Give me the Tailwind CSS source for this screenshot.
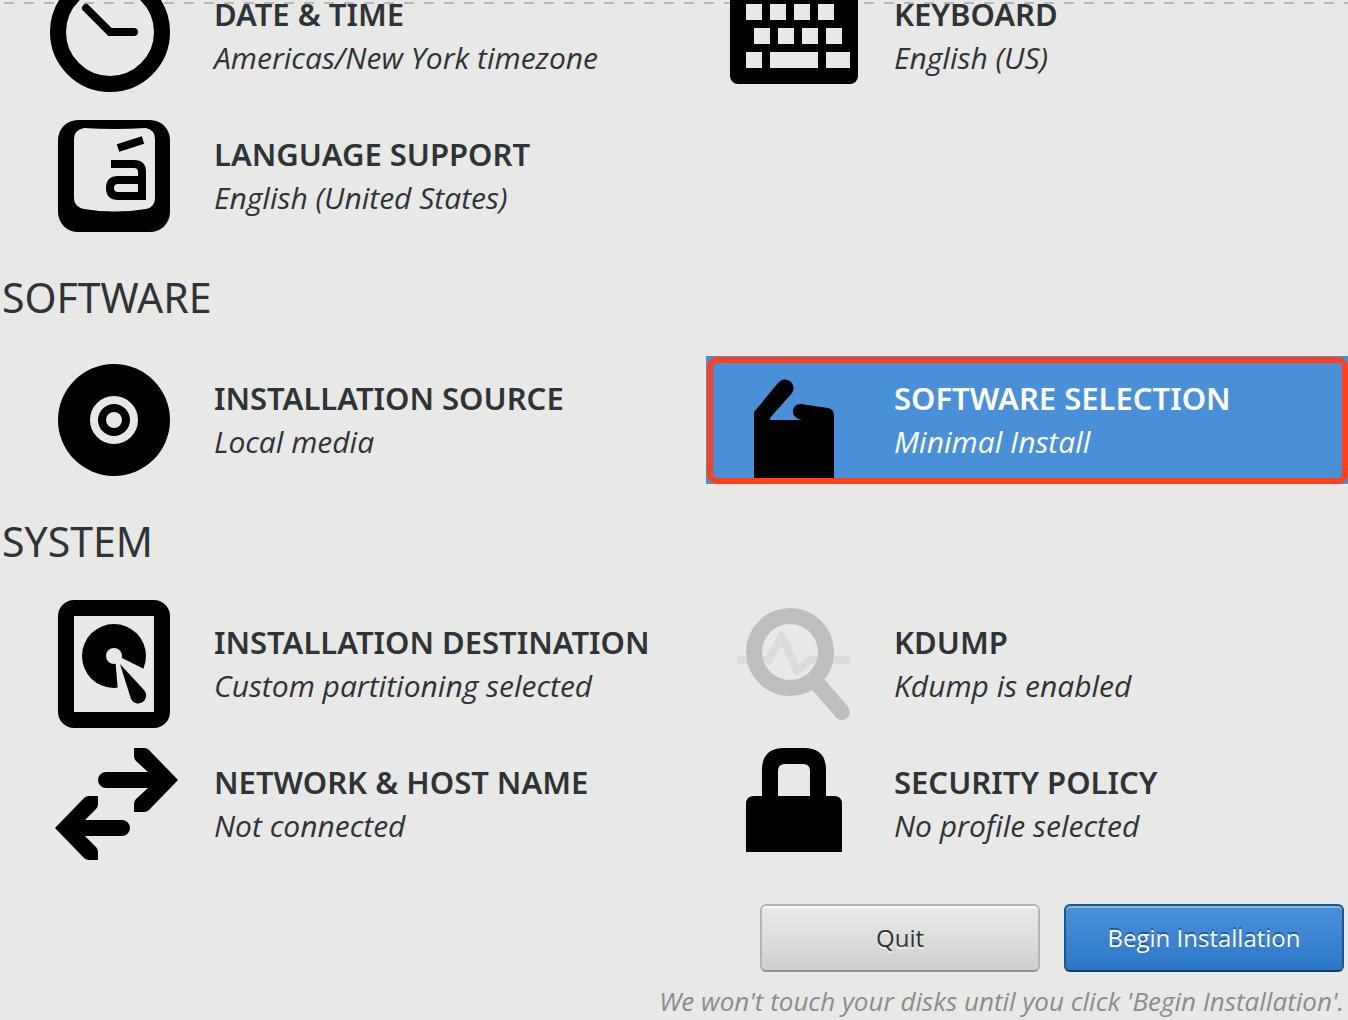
<!DOCTYPE html>
<html lang="en">
<head>
<meta charset="utf-8">
<title>Installation Summary</title>
<script src="https://cdn.jsdelivr.net/npm/@tailwindcss/browser@4"></script>
</head>
<body class="relative min-h-screen overflow-hidden bg-[#e8e8e6] font-['Noto_Sans',sans-serif] text-[#2e3436]">
<!-- scroll edge marker -->
<div class="absolute inset-x-0 top-0.5 h-0.5 bg-[repeating-linear-gradient(90deg,transparent_0_4px,#b6b6b4_4px_14px,transparent_14px_20px)]"></div>

<main class="relative -mt-7">
  <section class="grid grid-cols-2 gap-x-[38px] gap-y-3 pl-[26px]">
    <button type="button" class="flex h-32 items-center gap-9 pl-6 text-left">
      <svg class="size-32 shrink-0" viewBox="0 0 128 128" aria-hidden="true">
        <circle cx="60" cy="60" r="52" fill="none" stroke="#000" stroke-width="16"/>
        <path d="M36 36 60 60H84" fill="none" stroke="#000" stroke-width="8" stroke-linecap="round"/>
      </svg>
      <span class="whitespace-nowrap">
        <span class="block text-[31px] leading-[43px] font-semibold">DATE &amp; TIME</span>
        <span class="block font-['Open_Sans',sans-serif] text-[30px] leading-[43px] italic">Americas/New York timezone</span>
      </span>
    </button>
    <button type="button" class="flex h-32 items-center gap-9 pl-6 text-left">
      <svg class="size-32 shrink-0" viewBox="0 0 128 128" aria-hidden="true">
        <rect y="8" width="128" height="104" rx="8"/>
        <path fill="#e8e8e6" d="M16 32h16v16H16zM40 32h16v16H40zM64 32h16v16H64zM88 32h16v16H88zM24 56h16v16H24zM48 56h16v16H48zM72 56h16v16H72zM96 56h16v16H96zM16 80h16v16H16zM40 80h48v16H40zM96 80h24v16H96z"/>
      </svg>
      <span class="whitespace-nowrap">
        <span class="block text-[31px] leading-[43px] font-semibold">KEYBOARD</span>
        <span class="block font-['Open_Sans',sans-serif] text-[30px] leading-[43px] italic">English (US)</span>
      </span>
    </button>
    <button type="button" class="flex h-32 items-center gap-9 pl-6 text-left">
      <svg class="size-32 shrink-0" viewBox="0 0 128 128" aria-hidden="true">
        <rect x="8" y="8" width="112" height="112" rx="20"/>
        <path fill="#e8e8e6" d="M34 16Q64 18 96 16Q105 18 105 27V86Q105 95 96 97Q64 102 34 97Q24 95 24 86V27Q24 18 34 16Z"/>
        <path d="M68 36 93 28M61 52H84Q92 52 92 60V84H68Q60 84 60 76Q60 68 68 68H92" fill="none" stroke="#000" stroke-width="8"/>
        <path d="M88 80h8v8h-8z"/>
      </svg>
      <span class="whitespace-nowrap">
        <span class="block text-[31px] leading-[43px] font-semibold">LANGUAGE SUPPORT</span>
        <span class="block font-['Open_Sans',sans-serif] text-[30px] leading-[43px] italic">English (United States)</span>
      </span>
    </button>
  </section>

  <h2 class="flex h-[116px] items-center pl-0.5 text-[41px]">SOFTWARE</h2>
  <section class="grid grid-cols-2 gap-x-[38px] gap-y-3 pl-[26px]">
    <button type="button" class="flex h-32 items-center gap-9 pl-6 text-left">
      <svg class="size-32 shrink-0" viewBox="0 0 128 128" aria-hidden="true">
        <circle cx="64" cy="64" r="56"/>
        <circle cx="64" cy="64" r="20" fill="none" stroke="#e8e8e6" stroke-width="8"/>
        <circle cx="64" cy="64" r="8" fill="#e8e8e6"/>
      </svg>
      <span class="whitespace-nowrap">
        <span class="block text-[31px] leading-[43px] font-semibold">INSTALLATION SOURCE</span>
        <span class="block font-['Open_Sans',sans-serif] text-[30px] leading-[43px] italic">Local media</span>
      </span>
    </button>
    <button type="button" class="relative flex h-32 items-center gap-9 bg-[#4a90d9] pl-6 text-left text-white">
      <svg class="size-32 shrink-0" viewBox="0 0 128 128" aria-hidden="true">
        <path fill="#000" d="M24 128V56L48 27A8 8 0 0 1 62 37L40 62V64H72Q63 62 63 56Q63 48 71 48L98 52Q104 53 104 60V128Z"/>
      </svg>
      <span class="whitespace-nowrap">
        <span class="block text-[31px] leading-[43px] font-semibold">SOFTWARE SELECTION</span>
        <span class="block font-['Open_Sans',sans-serif] text-[30px] leading-[43px] italic">Minimal Install</span>
      </span>
      <span class="absolute top-px right-0 bottom-0 left-px rounded-[10px] border-6 border-[#ff401a]"></span>
    </button>
  </section>

  <h2 class="flex h-[116px] items-center pl-0.5 text-[41px]">SYSTEM</h2>
  <section class="grid grid-cols-2 gap-x-[38px] gap-y-3 pl-[26px]">
    <button type="button" class="flex h-32 items-center gap-9 pl-6 text-left">
      <svg class="size-32 shrink-0" viewBox="0 0 128 128" aria-hidden="true">
        <rect x="8" width="112" height="128" rx="16"/>
        <path fill="#e8e8e6" d="M24 16h80v96H24z"/>
        <circle cx="64" cy="56" r="32"/>
        <path fill="#e8e8e6" d="M65 56 68 92H100L94 69 70 57Z"/>
        <circle cx="64" cy="56" r="8" fill="#e8e8e6"/>
        <path d="M70 64 94 90A8 8 0 1 1 81 99Z"/>
      </svg>
      <span class="whitespace-nowrap">
        <span class="block text-[31px] leading-[43px] font-semibold">INSTALLATION DESTINATION</span>
        <span class="block font-['Open_Sans',sans-serif] text-[30px] leading-[43px] italic">Custom partitioning selected</span>
      </span>
    </button>
    <button type="button" class="flex h-32 items-center gap-9 pl-6 text-left">
      <svg class="size-32 shrink-0" viewBox="0 0 128 128" fill="none" aria-hidden="true">
        <path d="M7 60H39L52 36 67 71 79 60H120" stroke="#dcdcda" stroke-width="8" stroke-linejoin="round"/>
        <circle cx="60" cy="52" r="36" stroke="#bebebe" stroke-width="16"/>
        <path d="M86 82 112 112" stroke="#bebebe" stroke-width="16" stroke-linecap="round"/>
      </svg>
      <span class="whitespace-nowrap">
        <span class="block text-[31px] leading-[43px] font-semibold">KDUMP</span>
        <span class="block font-['Open_Sans',sans-serif] text-[30px] leading-[43px] italic">Kdump is enabled</span>
      </span>
    </button>
    <button type="button" class="flex h-32 items-center gap-9 pl-6 text-left">
      <svg class="size-32 shrink-0" viewBox="0 0 128 128" aria-hidden="true">
        <path d="M56 32H98L86 21Q84 19 84 16V8H94Q97 8 99 10L128 40 99 70Q97 72 94 72H84V64Q84 61 86 59L98 48H56A8 8 0 0 1 56 32Z"/>
        <path d="M72 80H35L46 69Q48 67 48 64V56H39Q36 56 34 58L5 88 34 118Q36 120 39 120H48V112Q48 109 46 107L35 96H72A8 8 0 0 0 72 80Z"/>
      </svg>
      <span class="whitespace-nowrap">
        <span class="block text-[31px] leading-[43px] font-semibold">NETWORK &amp; HOST NAME</span>
        <span class="block font-['Open_Sans',sans-serif] text-[30px] leading-[43px] italic">Not connected</span>
      </span>
    </button>
    <button type="button" class="flex h-32 items-center gap-9 pl-6 text-left">
      <svg class="size-32 shrink-0" viewBox="0 0 128 128" aria-hidden="true">
        <path d="M16 112V64Q16 56 24 56H32V30Q32 8 54 8H74Q96 8 96 30V56H104Q112 56 112 64V112ZM48 56H80V31Q80 24 73 24H55Q48 24 48 31Z"/>
      </svg>
      <span class="whitespace-nowrap">
        <span class="block text-[31px] leading-[43px] font-semibold">SECURITY POLICY</span>
        <span class="block font-['Open_Sans',sans-serif] text-[30px] leading-[43px] italic">No profile selected</span>
      </span>
    </button>
  </section>
</main>

<footer class="relative flex flex-col items-end pt-9 pr-1 font-['Open_Sans',sans-serif]">
  <div class="flex gap-6">
    <button type="button" class="h-[68px] w-[280px] rounded-md border-2 border-[#b4b4b0] border-b-[#92928a] bg-linear-to-b from-[#e9e9e8] via-[#dededd] to-[#cececc] text-2xl inset-shadow-[0_2px_0_#fafafa] text-shadow-[0_2px_0_#f0f0f0]">Quit</button>
    <button type="button" class="h-[68px] w-[280px] rounded-md border-2 border-[#1c5794] border-b-[#17406b] bg-linear-to-b from-[#4a90d9] via-[#3c85d3] to-[#2a76c6] text-2xl text-white inset-shadow-[0_2px_0_#85b4e6] text-shadow-[0_-2px_0_#1f5c99]">Begin Installation</button>
  </div>
  <p class="mt-3 text-[26px] leading-[34px] whitespace-nowrap text-[#8b8d8b] italic">We won't touch your disks until you click 'Begin Installation'.</p>
</footer>
</body>
</html>
